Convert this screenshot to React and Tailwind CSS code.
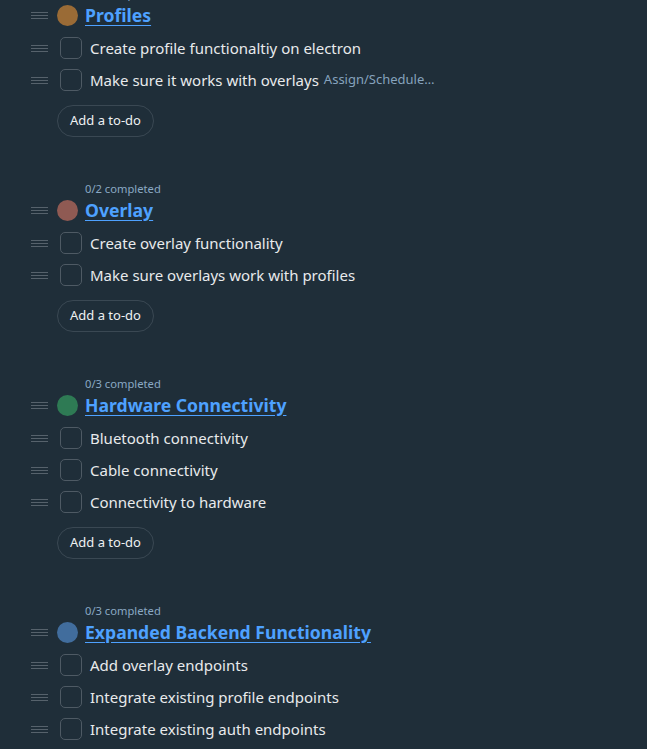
import React from "react";

const sections = [
  {
    done: "0/2 completed",
    title: "Profiles",
    color: "bg-[#9a6b36]",
    todos: [
      { text: "Create profile functionaltiy on electron" },
      { text: "Make sure it works with overlays", extra: "Assign/Schedule…" },
    ],
  },
  {
    done: "0/2 completed",
    title: "Overlay",
    color: "bg-[#8f5a53]",
    todos: [
      { text: "Create overlay functionality" },
      { text: "Make sure overlays work with profiles" },
    ],
  },
  {
    done: "0/3 completed",
    title: "Hardware Connectivity",
    color: "bg-[#2e7a54]",
    todos: [
      { text: "Bluetooth connectivity" },
      { text: "Cable connectivity" },
      { text: "Connectivity to hardware" },
    ],
  },
  {
    done: "0/3 completed",
    title: "Expanded Backend Functionality",
    color: "bg-[#416d9d]",
    todos: [
      { text: "Add overlay endpoints" },
      { text: "Integrate existing profile endpoints" },
      { text: "Integrate existing auth endpoints" },
    ],
  },
];

function Handle() {
  return (
    <div className="flex w-[17px] flex-col gap-[2px]">
      <div className="h-px bg-[#56626c]" />
      <div className="h-px bg-[#56626c]" />
      <div className="h-px bg-[#56626c]" />
    </div>
  );
}

function Section({ s }) {
  return (
    <div className="mb-[46px]">
      <div className="h-[12px] pl-[85px] text-[11.2px] leading-[12px] text-[#8aa9c4]">
        {s.done}
      </div>
      <div className="flex h-[30px] items-center pl-[31px]">
        <Handle />
        <div className={`ml-[9px] h-[21px] w-[21px] rounded-full ${s.color}`} />
        <a className="ml-[7px] text-[17.6px] font-bold leading-[24px] text-[#4ea1ff] underline underline-offset-[3px]">
          {s.title}
        </a>
      </div>
      <div className="mt-[2px]">
        {s.todos.map((t, i) => (
          <div key={i} className="flex h-8 items-center pl-[31px]">
            <Handle />
            <div className="ml-[12px] h-[22px] w-[22px] rounded-[5px] border border-[#4e5a64]" />
            <span className="ml-[8px] text-[15px] text-[#e8eaec]">{t.text}</span>
            {t.extra && (
              <span className="ml-[5px] text-[13px] text-[#86a3bd]">{t.extra}</span>
            )}
          </div>
        ))}
      </div>
      <div className="mt-[9px] pl-[57px]">
        <button className="flex h-8 w-[97px] items-center justify-center rounded-full border border-[#3a4853] text-[13px] text-[#eef0f2]">
          Add a to-do
        </button>
      </div>
    </div>
  );
}

export default function App() {
  return (
    <div
      className="h-[749px] w-[647px] overflow-hidden bg-[#1f2e39]"
      style={{ fontFamily: '"Noto Sans", "Open Sans", sans-serif' }}
    >
      <div className="mt-[-12px]">
        {sections.map((s, i) => (
          <Section key={i} s={s} />
        ))}
      </div>
    </div>
  );
}
